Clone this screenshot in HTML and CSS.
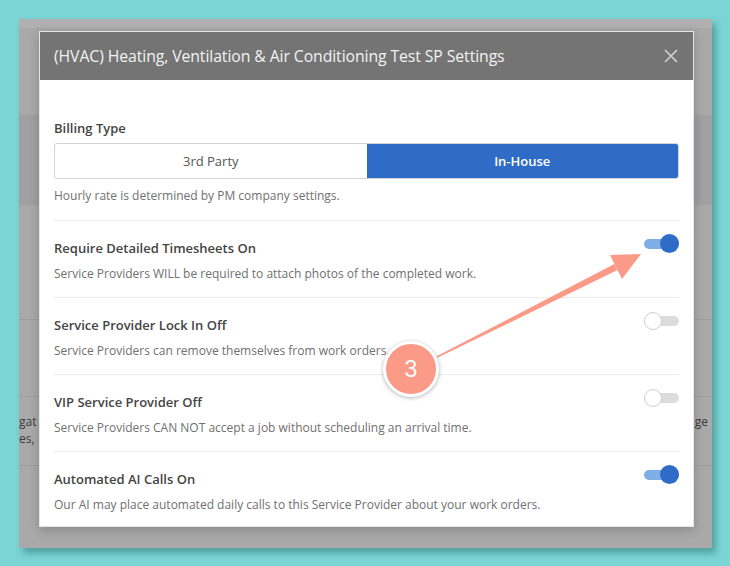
FILE: index.html
```html
<!DOCTYPE html>
<html>
<head>
  <meta name="viewport" content="width=device-width, initial-scale=1">
  <link rel="stylesheet" href="styles.css">
</head>
<body>
  <div class="shot">
    <!-- dimmed page behind the modal -->
    <div class="page">
      <div class="page-top"></div>
      <div class="page-head"></div>
      <div class="page-band"></div>
      <div class="page-row r1"></div>
      <div class="page-row r2"></div>
      <div class="page-row r3">
        <span class="edge-left">gat<br>es,</span>
        <span class="edge-right">ge</span>
      </div>
      <div class="page-row r4"></div>
    </div>

    <div class="modal">
      <div class="modal-header">
        <span class="modal-title">(HVAC) Heating, Ventilation &amp; Air Conditioning Test SP Settings</span>
        <svg class="close" width="14" height="14" viewBox="0 0 14 14">
          <path d="M1 1 L13 13 M13 1 L1 13" stroke="#d2d2d2" stroke-width="1.6" fill="none"/>
        </svg>
      </div>
      <div class="modal-body">
        <div class="billing">
          <div class="label">Billing Type</div>
          <div class="segmented">
            <div class="seg">3rd Party</div>
            <div class="seg active">In-House</div>
          </div>
          <div class="hint">Hourly rate is determined by PM company settings.</div>
        </div>

        <div class="setting">
          <div class="text">
            <div class="label">Require Detailed Timesheets On</div>
            <div class="hint">Service Providers WILL be required to attach photos of the completed work.</div>
          </div>
          <span class="toggle on"></span>
        </div>

        <div class="setting">
          <div class="text">
            <div class="label">Service Provider Lock In Off</div>
            <div class="hint">Service Providers can remove themselves from work orders.</div>
          </div>
          <span class="toggle"></span>
        </div>

        <div class="setting">
          <div class="text">
            <div class="label">VIP Service Provider Off</div>
            <div class="hint">Service Providers CAN NOT accept a job without scheduling an arrival time.</div>
          </div>
          <span class="toggle"></span>
        </div>

        <div class="setting last">
          <div class="text">
            <div class="label">Automated AI Calls On</div>
            <div class="hint">Our AI may place automated daily calls to this Service Provider about your work orders.</div>
          </div>
          <span class="toggle on"></span>
        </div>
      </div>
    </div>
  </div>

  <!-- step marker pointing at the timesheets switch -->
  <svg class="callout" width="730" height="566" viewBox="0 0 730 566">
    <polygon points="436.6,356.3 437.4,357.7 617.6,270.1 614.4,263.9" fill="#fb9a86"/>
    <polygon points="641,254 610,255 622,279" fill="#fb9a86"/>
  </svg>
  <div class="step">3</div>
</body>
</html>
```

FILE: styles.css
```css
body {
  margin: 0;
  width: 730px;
  height: 566px;
  background: #7cd5d5;
  font-family: "Open Sans", "Noto Sans", sans-serif;
  position: relative;
  overflow: hidden;
}

.shot {
  position: absolute;
  left: 19px;
  top: 19px;
  width: 693px;
  height: 529px;
  box-shadow: 4px 5px 7px rgba(0, 60, 60, 0.35);
}

.page {
  height: 100%;
  display: flex;
  flex-direction: column;
  background: #a9a9a9;
  overflow: hidden;
}
.page-top { height: 9px; background: #b0b0b0; }
.page-head { height: 87px; background: #a9a9a9; }
.page-band { height: 90px; background: #a1a1a4; }
.page-row {
  border-bottom: 1px solid #9d9d9d;
  background: #a9a9a9;
  position: relative;
}
.r1 { height: 114px; }
.r2 { height: 76px; }
.r3 { height: 68px; }
.r4 { flex: 1; border-bottom: none; }

.edge-left, .edge-right {
  position: absolute;
  top: 16px;
  font-size: 12px;
  line-height: 17px;
  color: #3c3c3c;
}
.edge-left { left: 0; }
.edge-right { right: 4px; }

.modal {
  position: absolute;
  left: 20px;
  top: 12px;
  width: 653px;
  height: 494px;
  background: #fff;
  border: 1px solid #e6e6e6;
  box-shadow: 0 3px 10px rgba(0, 0, 0, 0.2);
}

.modal-header {
  height: 48px;
  background: #747474;
  display: flex;
  align-items: center;
  justify-content: space-between;
  padding: 0 15px 0 14px;
}
.modal-title {
  color: #f2f2f2;
  font-size: 15.8px;
  letter-spacing: -0.1px;
}

.modal-body {
  padding: 39px 14px 0 14px;
}

.label {
  font-size: 13px;
  font-weight: 600;
  line-height: 18px;
  color: #444;
}
.hint {
  font-size: 12px;
  line-height: 16px;
  color: #707070;
}

.billing {
  padding-bottom: 16px;
  border-bottom: 1px solid #ececec;
}
.segmented {
  display: flex;
  box-sizing: border-box;
  margin: 6px 0 9px;
  height: 36px;
  border: 1px solid #d3d3d3;
  border-radius: 3px;
  overflow: hidden;
}
.seg {
  flex: 1;
  display: flex;
  align-items: center;
  justify-content: center;
  font-size: 13px;
  color: #555;
}
.seg.active {
  background: #2f6cc8;
  color: #fff;
  font-weight: 600;
}

.setting {
  display: flex;
  align-items: flex-start;
  justify-content: space-between;
  padding: 18px 0 15px;
  border-bottom: 1px solid #ececec;
}
.setting.last { border-bottom: none; }
.setting .hint { margin-top: 9px; }

.toggle {
  position: relative;
  width: 35px;
  height: 10px;
  margin-top: 0;
  border-radius: 5px;
  background: #dcdcdc;
}
.toggle::after {
  content: "";
  position: absolute;
  top: -4px;
  left: 0;
  width: 16px;
  height: 16px;
  border-radius: 50%;
  background: #fff;
  border: 1px solid #cfcfcf;
}
.toggle.on { background: #7eaee6; }
.toggle.on::after {
  left: auto;
  right: 0;
  top: -5px;
  width: 19px;
  height: 19px;
  border: none;
  background: #2f6cc8;
}

.callout {
  position: absolute;
  left: 0;
  top: 0;
  pointer-events: none;
}
.step {
  position: absolute;
  left: 383px;
  top: 341px;
  width: 50px;
  height: 50px;
  border: 3px solid #fff;
  border-radius: 50%;
  background: #fb9a86;
  color: #fff;
  font-family: "Liberation Sans", sans-serif;
  font-size: 23px;
  display: flex;
  align-items: center;
  justify-content: center;
  box-shadow: 0 1px 4px rgba(0, 0, 0, 0.3);
}
```
